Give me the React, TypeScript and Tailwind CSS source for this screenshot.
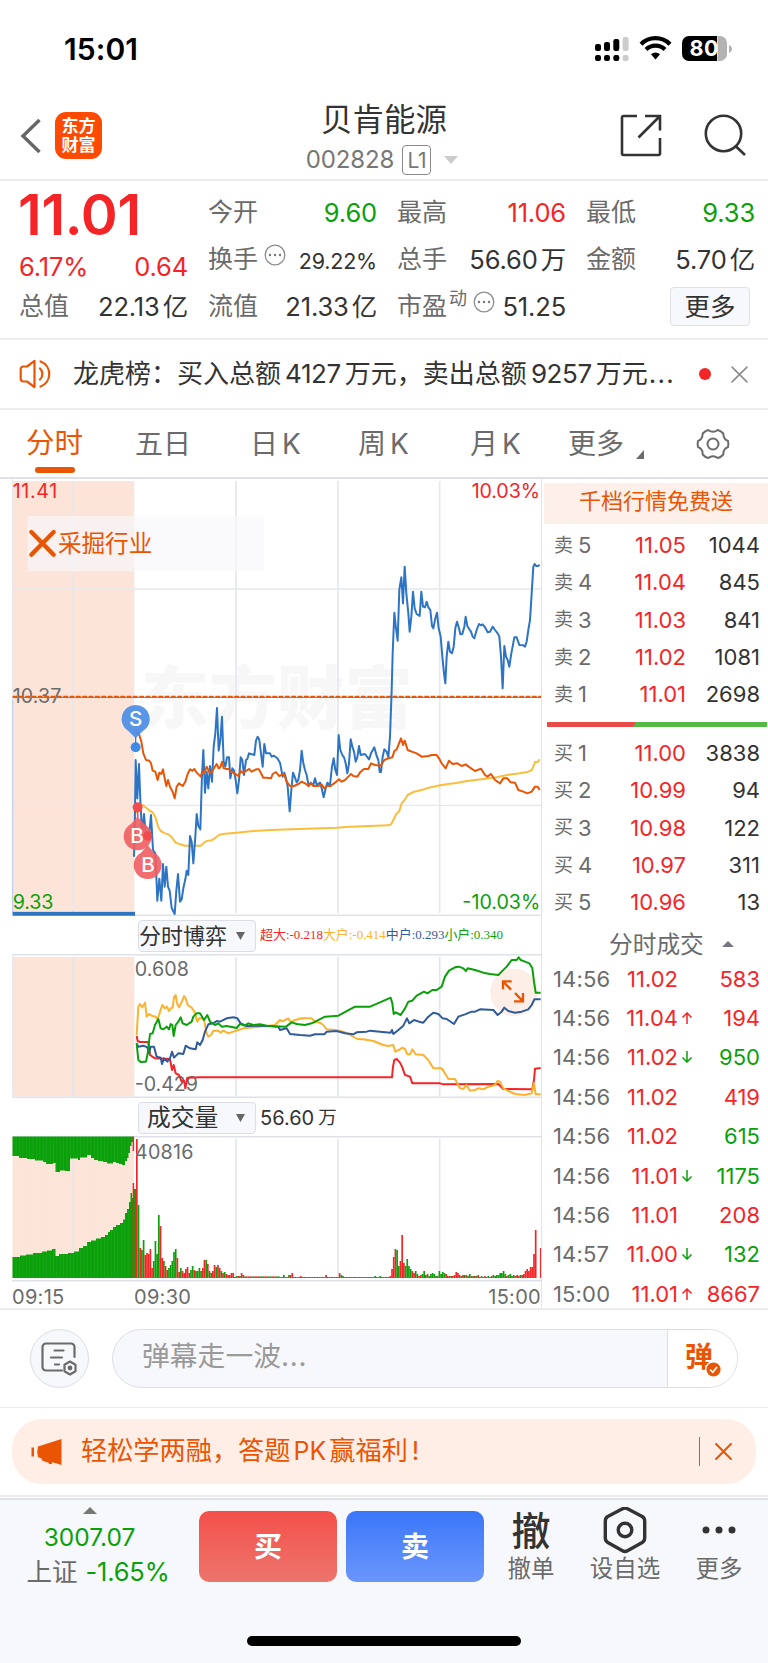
import React from "react";

const PRICE =
  "402,1160 404,1100 407,870 412,985 417,882 421,990 426,1090 432,1032 438,1100 446,1110 453,1035 459,1140 466,1150 472,1292 478,1226 484,1292 489,1182 494,1250 499,1190 504,1250 509,1262 515,1314 524,1332 529,1262 534,1212 540,1295 545,1288 550,1255 556,1228 560,1202 565,1215 570,1098 575,1115 580,1180 586,1100 590,1032 595,1068 601,1078 606,915 610,840 615,968 620,905 625,955 630,888 636,935 641,830 646,790 651,714 656,842 661,810 666,740 671,875 676,890 681,862 687,862 691,925 697,895 702,902 707,930 712,970 717,930 722,862 727,870 732,915 738,870 742,867 747,850 763,855 768,812 773,800 778,810 783,850 788,890 793,822 798,850 810,850 815,860 822,857 832,865 840,878 848,920 853,908 858,925 863,950 869,1024 874,960 879,908 884,920 890,937 895,930 900,900 905,842 910,880 915,900 920,915 926,948 932,938 940,945 945,925 950,945 960,938 965,955 971,982 977,955 982,938 990,945 996,890 1001,865 1006,900 1011,915 1016,795 1021,840 1027,855 1032,862 1037,880 1042,910 1047,880 1052,808 1057,830 1062,845 1067,875 1072,862 1077,828 1082,855 1095,852 1107,868 1113,850 1123,832 1130,858 1135,870 1139,906 1143,906 1148,860 1153,838 1160,845 1165,862 1170,800 1175,660 1178,550 1183,428 1188,475 1193,512 1198,358 1204,322 1209,400 1214,290 1219,370 1225,430 1229,485 1234,440 1239,365 1244,415 1250,432 1259,438 1264,365 1269,410 1275,412 1280,395 1285,412 1291,420 1296,468 1300,475 1306,445 1311,428 1316,475 1322,500 1327,560 1332,610 1336,640 1340,560 1345,515 1350,545 1356,550 1361,530 1366,475 1371,455 1377,475 1381,493 1387,492 1393,470 1397,440 1402,468 1408,478 1413,485 1418,500 1423,505 1430,480 1437,462 1443,466 1448,463 1455,472 1463,487 1470,485 1478,470 1485,480 1493,490 1498,500 1503,560 1508,655 1513,528 1518,560 1523,570 1528,590 1534,550 1543,502 1550,502 1558,525 1570,526 1575,530 1580,515 1585,480 1590,450 1595,370 1600,290 1604,282 1608,288 1614,288 1619,284";
const SECTOR =
  "407,780 412,790 418,795 424,815 430,850 438,870 448,872 453,880 458,902 466,905 473,930 478,908 484,912 489,898 494,925 499,948 504,930 510,950 518,965 524,985 530,950 537,940 548,948 556,935 563,912 570,898 577,902 583,897 590,908 602,920 607,905 613,908 620,890 627,905 633,910 640,898 650,882 656,895 661,892 666,875 671,895 680,897 687,897 692,905 700,908 715,918 722,903 728,908 738,903 747,897 755,905 768,898 777,898 783,910 790,923 800,923 813,925 818,912 828,906 837,918 852,912 860,935 870,948 882,948 895,942 905,935 915,940 925,948 932,940 940,948 955,948 965,943 972,955 982,948 992,948 1005,938 1017,928 1025,935 1035,930 1045,920 1053,912 1060,918 1072,920 1082,905 1092,897 1105,897 1113,880 1125,885 1142,887 1153,870 1165,865 1177,862 1183,843 1190,838 1197,820 1203,805 1209,825 1214,812 1223,840 1235,845 1250,850 1265,860 1285,858 1295,855 1310,855 1317,865 1325,880 1337,895 1347,872 1358,882 1372,880 1385,888 1397,883 1410,893 1425,903 1443,896 1455,915 1462,920 1473,912 1485,930 1500,940 1510,925 1522,925 1532,937 1545,938 1555,960 1570,965 1582,970 1595,965 1605,950 1613,950 1619,960";
const AVERAGE =
  "410,1030 413,1005 428,1005 440,1015 450,1023 458,1027 467,1043 475,1072 482,1083 495,1090 505,1093 515,1102 527,1118 540,1123 555,1127 580,1127 602,1127 612,1118 620,1113 635,1111 648,1102 658,1094 675,1091 710,1088 760,1083 810,1080 1010,1073 1050,1070 1165,1066 1173,1063 1180,1050 1188,1033 1198,1023 1205,1000 1215,988 1223,975 1240,966 1265,960 1280,955 1320,946 1350,941 1370,939 1400,933 1450,927 1490,922 1525,914 1560,910 1585,905 1595,900 1600,890 1605,876 1613,876 1619,868";

const FLOW_YELLOW =
  "410,375 415,290 420,282 427,292 435,278 440,320 447,312 455,317 467,320 473,330 480,305 487,285 495,295 501,290 507,303 513,295 518,292 522,262 527,255 531,280 537,292 543,280 548,270 552,258 557,265 563,285 575,293 583,305 588,320 592,335 598,325 605,325 612,330 620,370 625,380 633,375 640,362 655,362 662,368 670,362 685,370 700,365 715,360 730,355 760,352 800,348 825,345 840,330 848,334 855,330 865,325 872,337 885,330 905,325 935,325 945,335 960,338 970,345 980,358 1005,360 1030,365 1045,372 1072,387 1090,388 1120,393 1150,405 1165,408 1180,405 1186,425 1200,418 1207,413 1215,417 1222,433 1230,433 1237,418 1247,433 1270,435 1285,450 1300,475 1325,475 1335,490 1345,507 1365,507 1372,520 1380,535 1390,537 1399,525 1410,542 1425,540 1435,535 1450,538 1465,530 1485,525 1492,513 1500,515 1510,535 1525,543 1545,552 1575,555 1595,550 1602,520 1607,553 1622,553";
const FLOW_GREEN =
  "410,400 415,450 422,456 432,455 438,455 443,430 450,372 458,370 465,345 475,327 482,355 490,358 500,350 507,358 512,342 517,345 521,378 527,345 535,335 542,322 548,340 560,345 575,335 580,320 590,310 600,310 612,330 622,315 630,335 645,345 655,340 665,350 680,348 710,354 720,342 735,347 745,340 760,345 780,343 800,347 820,349 858,350 875,337 890,342 915,345 935,340 975,320 1015,317 1065,290 1110,290 1140,277 1172,263 1177,280 1181,312 1187,307 1202,315 1215,295 1225,275 1237,272 1250,257 1272,245 1282,250 1297,240 1310,240 1325,230 1335,200 1347,182 1365,172 1377,170 1390,175 1398,183 1403,175 1425,180 1450,188 1470,192 1495,195 1505,185 1520,170 1535,150 1550,150 1556,142 1562,150 1575,155 1588,160 1597,175 1602,215 1607,248 1622,248";
const FLOW_BLUE =
  "410,400 415,410 430,407 442,412 447,430 452,410 462,410 470,440 482,443 486,462 492,445 502,455 510,445 516,425 522,443 535,430 550,432 557,407 570,415 587,418 592,397 600,405 608,390 615,365 625,343 640,340 650,333 660,335 680,325 700,322 712,325 722,340 740,348 775,347 810,348 835,350 840,360 860,355 870,372 900,375 930,377 945,373 973,373 980,365 1010,363 1035,370 1060,373 1070,367 1100,365 1110,362 1140,365 1172,368 1176,360 1180,372 1195,360 1210,347 1221,325 1228,340 1242,330 1257,335 1270,338 1285,320 1300,308 1315,312 1328,325 1340,327 1362,342 1375,320 1395,313 1415,305 1425,305 1440,298 1480,300 1493,315 1505,305 1513,293 1525,303 1545,308 1565,305 1585,298 1595,285 1603,268 1622,268";
const FLOW_RED =
  "410,378 413,393 420,396 445,396 450,435 465,445 510,447 516,480 521,465 527,490 537,495 545,515 552,512 556,535 562,503 600,502 1176,502 1179,470 1183,450 1190,447 1200,458 1207,472 1215,495 1230,500 1237,520 1320,520 1330,523 1495,522 1510,537 1597,538 1602,510 1605,476 1622,474";

// Minute bars: sign gives the side (positive = red, negative = green), magnitude the height.
const OPENING = [
  139, -73, 30, -28, -38, 23, 25, 24, 29, 10, -17, -37, -24, -63, 52, 20, -17, 12, 8, -10, -13, -17, -26, -29, 20, 6, -10, 7, 5, 9,
  11, 5, -8, -12, 8, -7, -7, -10, -7, 10, 18, -18, 14, -7, -5, 7, 13, -11, 13, 10, -7, 5, -6, 4, 3, 3, 5, 5, 1, -2, 2, -2, 5, 3,
];
const SPIKES: Record<number, number> = {
  87: -3, 90: -3, 91: 3, 92: 5, 97: 2, 112: 3, 120: 5, 121: -3, 122: -2, 141: -2, 144: -2, 150: 2, 151: 9, 152: 21, 153: 29, 154: -28,
  155: -12, 156: 17, 157: 43, 158: 15, 159: -12, 160: -19, 161: -12, 162: -9, 163: 7, 164: 5, 165: -7, 166: -4, 167: 2, 168: 3,
  169: -4, 170: -7, 171: -3, 172: 4, 173: -2, 174: -4, 175: -5, 176: -4, 177: -2, 178: 2, 179: -7, 180: -4, 181: -6, 182: -5,
  183: 4, 184: 2, 185: 2, 186: -2, 187: 2, 188: 3, 189: 6, 190: 5, 191: 3, 192: -2, 193: 3, 194: -3, 195: 3, 196: -2, 197: -4,
  198: 2, 199: -2, 200: 2, 201: -2, 202: 3, 204: -2, 206: 2, 208: -2, 210: 2, 211: -3, 212: -2, 213: -3, 214: -3, 215: -5,
  216: -5, 217: -7, 218: -4, 219: 2, 220: -3, 221: -4, 222: -2, 223: 3, 224: -2, 225: 3, 226: 2, 227: -3, 228: 3, 229: 4, 230: 7,
  231: 9, 232: 7, 233: 11, 234: 11, 235: 24, 236: 48, 237: 0, 238: 0, 239: 30,
};
const VOLUME = Array.from({ length: 240 }, (_, i) => {
  if (i < OPENING.length) return OPENING[i];
  if (i in SPIKES) return SPIKES[i];
  const h = i < 85 ? 1.6 : 1;
  return i % 5 < 3 ? h : -h;
});

const SELLS = [
  ["5", "11.05", "1044"],
  ["4", "11.04", "845"],
  ["3", "11.03", "841"],
  ["2", "11.02", "1081"],
  ["1", "11.01", "2698"],
];
const BUYS = [
  ["1", "11.00", "3838"],
  ["2", "10.99", "94"],
  ["3", "10.98", "122"],
  ["4", "10.97", "311"],
  ["5", "10.96", "13"],
];
const TRADES: [string, string, string, string, boolean][] = [
  ["14:56", "11.02", "", "583", true],
  ["14:56", "11.04", "up", "194", true],
  ["14:56", "11.02", "down", "950", false],
  ["14:56", "11.02", "", "419", true],
  ["14:56", "11.02", "", "615", false],
  ["14:56", "11.01", "down", "1175", false],
  ["14:56", "11.01", "", "208", true],
  ["14:57", "11.00", "down", "132", false],
  ["15:00", "11.01", "up", "8667", true],
];

function Cross({ size, color, width }: { size: number; color: string; width: number }) {
  return (
    <svg width={size} height={size} viewBox="0 0 16 16" stroke={color} strokeWidth={width} strokeLinecap="round">
      <path d="M1 1L15 15M15 1L1 15" />
    </svg>
  );
}

function Dots() {
  return (
    <svg width="22" height="22" viewBox="0 0 22 22" className="shrink-0">
      <circle cx="11" cy="11" r="9.8" fill="none" stroke="#8c8c8c" strokeWidth="1.3" />
      <g fill="#777">
        <circle cx="6" cy="11" r="1.2" />
        <circle cx="11" cy="11" r="1.2" />
        <circle cx="16" cy="11" r="1.2" />
      </g>
    </svg>
  );
}

function StatusBar() {
  return (
    <div className="flex h-[98px] items-start justify-between pl-[64px] pr-[36px] pt-[34px]">
      <div className="text-[30px] font-semibold leading-[30px] tracking-[0.1px] text-black">15:01</div>
      <svg width="138" height="28" viewBox="0 0 138 28">
        <g>
          <rect x="1" y="10" width="6" height="7" rx="2.2" />
          <rect x="10" y="8" width="6" height="9" rx="2.2" />
          <rect x="19.3" y="5" width="6" height="12" rx="2.2" />
          <rect x="28.6" y="3" width="6" height="14" rx="2.2" fill="#ccc" />
          <rect x="1" y="21" width="6" height="6" rx="2.2" />
          <rect x="10" y="21" width="6" height="6" rx="2.2" />
          <rect x="19.3" y="21" width="6" height="6" rx="2.2" />
          <rect x="28.6" y="21" width="6" height="6" rx="2.2" fill="#ccc" />
        </g>
        <g fill="none" stroke="#000" strokeWidth="4.2">
          <path d="M47 10.2a20.5 20.5 0 0 1 29 0" />
          <path d="M52 15.6a13.5 13.5 0 0 1 19 0" />
        </g>
        <path d="M57 20.3a6.5 6.5 0 0 1 9 0L61.5 25.5z" />
        <path d="M95 2h28v25H95a7 7 0 0 1-7-7V9a7 7 0 0 1 7-7z" />
        <path d="M123.5 2h2.5a7 7 0 0 1 7 7v11a7 7 0 0 1-7 7h-2.5z" fill="#b3b3b3" />
        <path d="M135 11c4 1.5 4 6.5 0 8z" fill="#b3b3b3" />
        <text x="95.5" y="22" fontSize="21.5" fontWeight="700" fill="#fff" textLength="29" className="font-[Inter]">
          80
        </text>
      </svg>
    </div>
  );
}

function Header() {
  return (
    <div className="flex h-[83px] border-b-2 border-[#ececee]">
      <div className="flex w-[240px] items-start pl-[19px] pt-[14px]">
        <svg width="24" height="48" viewBox="0 0 24 48" fill="none" stroke="#666" strokeWidth="3.4">
          <path d="M20.5 8L4 24l16.5 16" />
        </svg>
        <div className="ml-[12px] flex h-[47px] w-[47px] flex-col items-center justify-center rounded-[11px] bg-[#ff4a02] text-[17px] font-bold leading-[19px] text-white">
          <span>东方</span>
          <span>财富</span>
        </div>
      </div>
      <div className="flex flex-1 flex-col items-center">
        <div className="mt-[2px] text-[31.5px] leading-[40px] text-[#333]">贝肯能源</div>
        <div className="mt-[2px] flex h-[36px] items-center pr-[4px] text-[#777]">
          <span className="text-[24px] leading-none tracking-[-0.1px]">002828</span>
          <span className="ml-[8px] flex h-[30px] w-[29px] items-center justify-center rounded-[4px] border-[1.5px] border-[#8a8a8a] text-[21px] leading-none tracking-[-0.5px]">
            L1
          </span>
          <svg width="14" height="8" viewBox="0 0 14 8" className="ml-[13px]" fill="#ccc">
            <path d="M0 0h14L7 8z" />
          </svg>
        </div>
      </div>
      <div className="flex w-[240px] items-start justify-end pr-[19px] pt-[14px]">
        <svg width="46" height="46" viewBox="0 0 46 46" fill="none" stroke="#333" strokeWidth="2.6">
          <path d="M19 4H5.500a1.500 1.500 0 0 0-1.500 1.500v36a1.500 1.500 0 0 0 1.500 1.500h35a1.500 1.500 0 0 0 1.500-1.500V26" />
          <path d="M27 4h15v14.500M42 4L20.500 25.500" />
        </svg>
        <svg width="46" height="46" viewBox="0 0 46 46" fill="none" stroke="#333" strokeWidth="2.6" className="ml-[39px]">
          <circle cx="20.5" cy="21.500" r="17.700" />
          <path d="M32.5 34l9.5 9" />
        </svg>
      </div>
    </div>
  );
}

function Num({ v, unit, c }: { v: string; unit?: string; c?: string }) {
  return (
    <span className={`flex items-center text-[25.5px] tracking-[-0.15px] ${c ?? "text-[#333]"}`}>
      {v}
      {unit && <span className="ml-[3px]">{unit}</span>}
    </span>
  );
}

function Quote() {
  const red = "text-[#f52427]";
  const green = "text-[#0aa00a]";
  const lab = "text-[25px] text-[#6b6b6b]";
  return (
    <div className="h-[159px] border-b-2 border-[#ececee] pl-[19px] pr-[13px] pt-[8px] leading-none">
      <div className="grid grid-cols-4 gap-x-[20px]">
        <div className="row-span-2 flex h-[94px] w-[169px] flex-col">
          <div className="ml-[-1px] mt-[-2px] text-[56px] font-semibold leading-[56px] tracking-[-0.3px] text-[#f52427]">11.01</div>
          <div className="mt-[11px] flex items-center justify-between">
            <Num v="6.17%" c={red} />
            <Num v="0.64" c={red} />
          </div>
        </div>
        <div className="flex h-[47px] items-center justify-between">
          <span className={lab}>今开</span>
          <Num v="9.60" c={green} />
        </div>
        <div className="flex h-[47px] items-center justify-between">
          <span className={lab}>最高</span>
          <Num v="11.06" c={red} />
        </div>
        <div className="flex h-[47px] items-center justify-between">
          <span className={lab}>最低</span>
          <Num v="9.33" c={green} />
        </div>
        <div className="flex h-[47px] items-center justify-between">
          <span className="flex items-center">
            <span className={lab}>换手</span>
            <span className="mb-[10px] ml-[6px]">
              <Dots />
            </span>
          </span>
          <span className="mt-[4px] text-[21.5px] tracking-[-0.2px] text-[#333]">29.22%</span>
        </div>
        <div className="flex h-[47px] items-center justify-between">
          <span className={lab}>总手</span>
          <Num v="56.60" unit="万" />
        </div>
        <div className="flex h-[47px] items-center justify-between">
          <span className={lab}>金额</span>
          <Num v="5.70" unit="亿" />
        </div>
        <div className="flex h-[47px] items-center justify-between">
          <span className={lab}>总值</span>
          <Num v="22.13" unit="亿" />
        </div>
        <div className="flex h-[47px] items-center justify-between">
          <span className={lab}>流值</span>
          <Num v="21.33" unit="亿" />
        </div>
        <div className="flex h-[47px] items-center justify-between">
          <span className="flex items-center">
            <span className={lab}>市盈</span>
            <span className="mb-[16px] ml-[2px] text-[18px] text-[#6b6b6b]">动</span>
            <span className="mb-[10px] ml-[6px]">
              <Dots />
            </span>
          </span>
          <Num v="51.25" />
        </div>
        <div className="flex h-[47px] items-center justify-end pr-[5px]">
          <span className="flex h-[39px] w-[80px] items-center justify-center rounded-[4px] border border-[#dfe1e6] bg-[#f7f8fb] text-[25.500px] text-[#333]">
            更多
          </span>
        </div>
      </div>
    </div>
  );
}

function Notice() {
  return (
    <div className="flex h-[70px] items-center border-b-2 border-[#ececee] pl-[19px] pr-[20px]">
      <svg width="34" height="30" viewBox="0 0 34 30" fill="none" stroke="#ea5504" strokeWidth="2.2" strokeLinejoin="round" strokeLinecap="round">
        <path d="M15.5 1.8v26.4L8 22.5H4.2a2.5 2.5 0 0 1-2.5-2.5V10a2.5 2.5 0 0 1 2.5-2.5H8z" />
        <path d="M21 9.5a7.5 7.5 0 0 1 0 11" />
        <path d="M21.5 2.5a13.3 13.3 0 0 1 0 25" />
      </svg>
      <div className="ml-[20px] flex w-[606px] items-center whitespace-nowrap text-[26px] leading-none text-[#333]">
        <span>龙虎榜：买入总额</span>
        <span className="mx-[4px] tracking-[-0.4px]">4127</span>
        <span>万元，卖出总额</span>
        <span className="mx-[4px] tracking-[-0.4px]">9257</span>
        <span>万元</span>
        <span className="ml-[1px] tracking-[1.2px]">...</span>
      </div>
      <span className="ml-[20px] h-[12px] w-[12px] rounded-full bg-[#f52427]" />
      <span className="ml-auto">
        <Cross size={17} color="#8c8c8c" width={1.5} />
      </span>
    </div>
  );
}

function Tabs() {
  const t = "flex items-center gap-[4px] text-[28px] leading-none text-[#6b6b6b]";
  return (
    <div className="flex h-[69px] items-center border-b-2 border-[#dfe1e8] pl-[26px]">
      <div className="relative w-[109px] text-[28.5px] leading-none text-[#ea5504]">
        分时
        <span className="absolute left-[9px] top-[38px] h-[6px] w-[40px] rounded-[3px] bg-[#ea5504]" />
      </div>
      <div className={`w-[115px] ${t}`}>五日</div>
      <div className={`w-[108px] ${t}`}>
        日<span>K</span>
      </div>
      <div className={`w-[112px] ${t}`}>
        周<span>K</span>
      </div>
      <div className={`w-[98px] ${t}`}>
        月<span>K</span>
      </div>
      <div className={`w-[128px] ${t}`}>
        更多
        <svg width="8" height="9" viewBox="0 0 8 9" className="ml-[8px] mt-[22px]" fill="#6b6b6b">
          <path d="M8 0v9H0z" />
        </svg>
      </div>
      <svg width="34" height="32" viewBox="0 0 34 32" fill="none" stroke="#6b6b6b" strokeWidth="2">
        <path
          strokeLinejoin="round"
          d="M12.2 2Q14.500 3.800 17 3.800Q19.500 3.800 21.800 2Q25 2.800 27.300 5.500Q27.300 9.500 29 11Q30.200 12.300 32 13Q32.800 16 32 19Q30.200 19.700 29 21Q27.300 22.500 27.300 26.500Q25 29.200 21.800 30Q19.500 28.200 17 28.200Q14.500 28.200 12.200 30Q9 29.200 6.700 26.500Q6.700 22.500 5 21Q3.800 19.700 2 19Q1.200 16 2 13Q3.800 12.300 5 11Q6.700 9.500 6.700 5.500Q9 2.800 12.200 2Z"
        />
        <circle cx="17" cy="16" r="5.500" />
      </svg>
    </div>
  );
}

function PriceChart() {
  return (
    <svg width="541" height="437" viewBox="0 27 1623 1311" className="block">
      <rect x="38" y="33" width="365" height="1290" fill="#fce5d8" />
      <g fill="#f7f7f8" fontSize="204" fontWeight="900" fontFamily="'Noto Sans CJK SC', sans-serif">
        <text x="422" y="760" textLength="816">
          东方财富
        </text>
      </g>
      <g stroke="#e6e8ee" strokeWidth="5" fill="none">
        <path d="M219 33V1330M708 33V1330M1014 33V1330M1319 33V1330" />
        <path d="M38 357H1623M38 1006H1623" strokeWidth="4" />
        <path d="M38 27V1337" strokeWidth="3" />
        <path d="M38 1336H1623" stroke="#e2e3e8" />
      </g>
      <path d="M38 690V1330" stroke="#a9c3e6" strokeWidth="2.5" />
      <g fontSize="59" className="font-[Inter]">
        <text x="38" y="84" fill="#f52427" textLength="134">11.41</text>
        <text x="38" y="700" fill="#6b6b6b" textLength="146">10.37</text>
        <text x="38" y="1317" fill="#0aa00a" textLength="122">9.33</text>
      </g>
      <path d="M38 682H1623" stroke="#8a8a8a" strokeWidth="4" />
      <path d="M38 680H1623" stroke="#ea5504" strokeWidth="6" strokeDasharray="14 5" />
      <path d="M38 1331H405" stroke="#2e74c4" strokeWidth="12" />
      <rect x="83" y="138" width="709" height="166" fill="#f7f8fc" fillOpacity=".65" />
      <path d="M94 186L161 254M161 186L94 254" stroke="#ea5504" strokeWidth="13" strokeLinecap="round" />
      <text x="174" y="247" fontSize="71" fill="#ea5504" textLength="283" fontFamily="'Noto Sans CJK SC', sans-serif">
        采掘行业
      </text>
      <g fill="none" strokeWidth="6" strokeLinejoin="round">
        <polyline points={AVERAGE} stroke="#fbbd3c" />
        <polyline points={PRICE} stroke="#2e74c4" />
        <polyline points={SECTOR} stroke="#ea5504" />
      </g>
      <g fontSize="59" className="font-[Inter]">
        <text x="1415" y="84" fill="#f52427" textLength="205">10.03%</text>
        <text x="1387" y="1318" fill="#0aa00a" textLength="234">-10.03%</text>
      </g>
      <g fill="#4c8de6" fillOpacity=".92">
        <path d="M407 705a42 42 0 0 1 22 78l-22 22l-22-22a42 42 0 0 1 22-78z" />
        <path d="M407 800V830" stroke="#2e82e6" strokeWidth="4" />
        <circle cx="407" cy="832" r="15" fill="#2e82e6" />
      </g>
      <path d="M413 1012V1044" stroke="#f04c4e" strokeWidth="5" />
      <circle cx="413" cy="1012" r="15" fill="#f04c4e" />
      <path d="M413 1040l20 22a42 42 0 1 1-40 0z" fill="#f15d60" fillOpacity=".9" />
      <path d="M443 1126l20 22a42 42 0 1 1-40 0z" fill="#f15d60" fillOpacity=".9" />
      <circle cx="443" cy="1098" r="14" fill="#f04c4e" />
      <g fill="#fff" fontSize="62" fontWeight="500" textAnchor="middle" className="font-[Inter]">
        <text x="407" y="768">S</text>
        <text x="411" y="1120">B</text>
        <text x="444" y="1205">B</text>
      </g>
    </svg>
  );
}

function FlowChart() {
  return (
    <svg width="541" height="144" viewBox="0 132 1623 432" className="block">
      <rect x="38" y="141" width="365" height="418" fill="#fce5d8" />
      <g stroke="#e2e5ec" strokeWidth="5" fill="none">
        <path d="M219 141V559M708 141V559M1014 141V559M1319 141V559" />
        <path d="M38 134H1623M38 562H1623" stroke="#dfe1e8" />
        <path d="M38 132V564" strokeWidth="3" />
      </g>
      <g fontSize="59" fill="#6b6b6b" className="font-[Inter]">
        <text x="404" y="199" textLength="163">0.608</text>
        <text x="404" y="542" textLength="190">-0.429</text>
      </g>
      <circle cx="1542" cy="247" r="71" fill="#fdeee7" />
      <g fill="none" strokeWidth="6" strokeLinejoin="round">
        <polyline points={FLOW_RED} stroke="#f52427" />
        <polyline points={FLOW_YELLOW} stroke="#fbb32e" />
        <polyline points={FLOW_BLUE} stroke="#2f5a9c" />
        <polyline points={FLOW_GREEN} stroke="#0aa00a" />
      </g>
      <path
        d="M1509 238V214H1535M1509 214L1533 239M1569 249V274H1542M1569 274L1545 249"
        fill="none"
        stroke="#ea5504"
        strokeWidth="7"
      />
    </svg>
  );
}

function VolumeChart() {
  return (
    <svg width="541" height="146" viewBox="0 0 541 146" className="block">
      <rect x="12.5" y="1" width="121.5" height="141" fill="#fce5d8" />
      <g stroke="#e2e5ec" strokeWidth="1.5" fill="none">
        <path d="M73 2V142M236 3V142M338 3V142M439.7 3V142" />
        <path d="M12 .7H541M12 144.700H541" stroke="#dfe1e8" />
      </g>
      <path
        fill="#0aa00a"
        d="M12.5 .5H133V6H131.5V10H130V17H128.5V22H127V25H125V29H122V28H119V27H116V26H113V27.5H107V26H103V25H98V24H94V22H91V19H87V21.5H80V24H78V22.5H70V35H65V34.5H60V36H55.5V27H53V28H46V26H43V24.5H35V23H27V22H19V20H12.5z"
      />
      <path
        fill="#0aa00a"
        d="M12.5 142V121H20V119.5H26V118.5H33V117H42V115.5H47V114.5H52V113H55.5V120H59V118H68V117H74V115.5H79V112H83V110H87V106H91V104.5H96V102.5H101V101H105V99H108V96H110V94H113V91H116V89H120V87H123V83.5H125V77H127V73H129V66H130.5V57H132V62H134V53H136V142z"
      />
      <g stroke="#fff" strokeOpacity=".13" strokeWidth=".6">
        {Array.from({ length: 34 }, (_, i) => (
          <path key={i} d={`M${16 + i * 3.4} 1V142`} />
        ))}
      </g>
      <path d="M133.4 .5V15M133.4 47V142" stroke="#f52427" strokeWidth="1.5" />
      {VOLUME.map((v, i) => (
        <rect
          key={i}
          x={136 + i * 1.69}
          y={142 - Math.abs(v)}
          width={1.69}
          height={Math.abs(v)}
          fill={v > 0 ? "#f52427" : "#0aa00a"}
        />
      ))}
      <text x="135" y="22.500" fontSize="19.7" fill="#6b6b6b" textLength="58.500" className="font-[Inter]">
        40816
      </text>
    </svg>
  );
}

function Picker({ label, size }: { label: string; size: string }) {
  return (
    <div className={`flex h-[32px] w-[118px] items-center rounded-[4px] border border-[#dcdee5] bg-[#f7f8fb] leading-none text-[#333] ${size}`}>
      <span>{label}</span>
      <svg width="9" height="8" viewBox="0 0 9 8" className="ml-auto mr-[10px]" fill="#666">
        <path d="M0 0h9L4.5 8z" />
      </svg>
    </div>
  );
}

function Charts() {
  return (
    <div className="w-[542px] border-r-[1.5px] border-[#e2e3e8]">
      <PriceChart />
      <div className="flex h-[38px] items-center pl-[138px] pt-[1px]">
        <Picker label="分时博弈" size="text-[22px]" />
        <div className="ml-[4px] whitespace-nowrap font-['Liberation_Serif','Noto_Sans_CJK_SC',serif] text-[12.95px] leading-none">
          <span className="text-[#f52427]">超大:-0.218</span>
          <span className="text-[#fbb32e]">大户:-0.414</span>
          <span className="text-[#2f5a9c]">中户:0.293</span>
          <span className="text-[#0aa00a]">小户:0.340</span>
        </div>
      </div>
      <FlowChart />
      <div className="flex h-[38px] items-center pl-[138px] pt-[1px]">
        <Picker label="成交量" size="pl-[8px] text-[23.800px]" />
        <div className="ml-[4px] flex gap-[4px] text-[20px] leading-none text-[#333]">
          <span>56.60</span>
          <span className="text-[18.500px]">万</span>
        </div>
      </div>
      <VolumeChart />
      <div className="flex h-[29px] items-center pl-[12px] text-[20px] leading-none tracking-[0.3px] text-[#6b6b6b]">
        <span className="w-[122px]">09:15</span>
        <span>09:30</span>
        <span className="ml-auto">15:00</span>
      </div>
    </div>
  );
}

function Level({ side, row }: { side: string; row: string[] }) {
  return (
    <div className="flex h-[37.3px] items-center pl-[11px] pr-[8px] text-[22px] leading-none">
      <span className="text-[19px] text-[#6b6b6b]">{side}</span>
      <span className="ml-[5px] text-[#6b6b6b]">{row[0]}</span>
      <span className="ml-auto text-[#f52427]">{row[1]}</span>
      <span className="w-[74px] text-right text-[#333]">{row[2]}</span>
    </div>
  );
}

function OrderBook() {
  return (
    <div className="flex-1 pl-[1px]">
      <div className="ml-[1px] mt-[4px] flex h-[41px] items-center justify-center bg-[#fdf0ea] pb-[5px] text-[22px] leading-none text-[#ea5504]">
        千档行情免费送
      </div>
      <div className="mt-[2.5px]">
        {SELLS.map((r) => (
          <Level key={r[0]} side="卖" row={r} />
        ))}
      </div>
      <div className="ml-[4px] mr-[1px] mt-[9px] h-[5px]">
        <svg width="220" height="5" viewBox="0 0 220 5" className="block">
          <path d="M0 0H220V5H0z" fill="#55b945" />
          <path d="M0 0H89L86 5H0z" fill="#e94b4b" />
        </svg>
      </div>
      <div className="mt-[7.5px]">
        {BUYS.map((r) => (
          <Level key={r[0]} side="买" row={r} />
        ))}
      </div>
      <div className="flex h-[38px] items-center pl-[66px] pt-[9px] text-[23.7px] leading-none text-[#6b6b6b]">
        分时成交
        <svg width="12" height="6" viewBox="0 0 12 6" className="ml-[18px]" fill="#77777f">
          <path d="M0 6h12L6 0z" />
        </svg>
      </div>
      <div>
        {TRADES.map((t, i) => (
          <div key={i} className="flex h-[39.4px] items-center pl-[10px] pr-[8px] text-[22px] leading-none">
            <span className="tracking-[0.15px] text-[#6b6b6b]">{t[0]}</span>
            <span className="ml-auto text-[#f52427]">{t[1]}</span>
            <span className="flex w-[15px] justify-end">
              {t[2] && (
                <svg
                  width="12"
                  height="12"
                  viewBox="0 0 12 12"
                  fill="none"
                  stroke={t[2] === "up" ? "#f52427" : "#0aa00a"}
                  strokeWidth="1.5"
                >
                  <path d={t[2] === "up" ? "M6 12V1M1.5 5.5L6 1l4.5 4.5" : "M6 0v11M1.5 6.5L6 11l4.5-4.5"} />
                </svg>
              )}
            </span>
            <span className={`w-[67px] text-right ${t[4] ? "text-[#f52427]" : "text-[#0aa00a]"}`}>{t[3]}</span>
          </div>
        ))}
      </div>
    </div>
  );
}

function CommentBar() {
  return (
    <div className="flex h-[98px] items-center border-b border-[#ececee] pl-[30px] pr-[30px]">
      <div className="flex h-[59px] w-[59px] items-center justify-center rounded-full border border-[#dcdee5] bg-[#f7f8fb]">
        <svg width="37" height="34" viewBox="0 0 37 34" fill="none" stroke="#6b6b6b" strokeWidth="2.2" strokeLinecap="round" strokeLinejoin="round">
          <path d="M21 28.5H5a3.5 3.5 0 0 1-3.5-3.500V5A3.5 3.5 0 0 1 5 1.5h25A3.5 3.5 0 0 1 33.5 5v10" />
          <path d="M13.5 8.5h9M10 15.5h11M14 22.5h4" />
          <path d="M29 19.5l5.5 3.3v6.4L29 32.5l-5.5-3.300v-6.400z" />
          <circle cx="29" cy="26" r="1.3" fill="#6b6b6b" />
        </svg>
      </div>
      <div className="ml-[23px] flex h-[59px] flex-1 items-center overflow-hidden rounded-full border border-[#dcdee5] bg-[#f7f8fb]">
        <div className="flex-1 pb-[4px] pl-[29px] text-[27.8px] leading-none text-[#9a9a9a]">
          弹幕走一波<span className="tracking-[0.8px]">...</span>
        </div>
        <div className="relative h-full w-[70px] border-l-[1.5px] border-[#dcdee5] bg-white">
          <span className="absolute left-[17px] top-[13px] text-[28px] font-bold leading-none text-[#ea5504]">弹</span>
          <svg width="17" height="17" viewBox="0 0 17 17" className="absolute left-[37px] top-[31px]">
            <circle cx="8.5" cy="8.5" r="7.8" fill="#ea5504" stroke="#fff" strokeWidth="1.4" />
            <path d="M5 8.5l2.800 2.800L12 6" fill="none" stroke="#fff" strokeWidth="1.7" />
          </svg>
        </div>
      </div>
    </div>
  );
}

function Promo() {
  return (
    <div className="h-[89px] border-b-2 border-[#ececee] px-[12px] pt-[11px]">
      <div className="flex h-[65px] items-center rounded-[30px] bg-[#feeee6] pl-[19px] pr-[24px]">
        <svg width="31" height="26" viewBox="0 0 31 26" fill="#ea5504">
          <path d="M.5 8.5h2.5v9H.5zM7 7.5L30.5 0v26l-9-2.800-1 1.800h-2.500l-1-2-2 .500-1-1.300L11 21.500l-.5-2L7 18q-1.5-5 0-10.500z" />
        </svg>
        <div className="ml-[19px] flex items-center whitespace-nowrap text-[26.2px] leading-none text-[#ea5504]">
          <span>轻松学两融，答题</span>
          <span className="mx-[3px] text-[25px]">PK</span>
          <span>赢福利</span>
          <span className="ml-[4px]">!</span>
        </div>
        <span className="ml-auto h-[29px] w-[1.5px] bg-[#ea5504]" />
        <span className="ml-[15px]">
          <Cross size={17} color="#ea5504" width={1.9} />
        </span>
      </div>
    </div>
  );
}

function BottomBar() {
  const b = "flex h-[71px] w-[138px] items-center justify-center rounded-[10px] text-[28px] font-bold leading-none text-white";
  const c = "flex flex-col items-center text-[23.5px] leading-none text-[#6b6b6b]";
  return (
    <div className="mt-[1px] flex flex-1 flex-col border-t-2 border-[#dfe0e4] bg-[#f7f8fb]">
      <div className="flex h-[134px] pt-[7px]">
        <div className="flex w-[199px] flex-col items-center pr-[3px] text-[24.5px] leading-none text-[#0aa00a]">
          <svg width="14" height="7" viewBox="0 0 14 7" className="mr-[17px]" fill="#777">
            <path d="M0 7h14L7 0z" />
          </svg>
          <div className="mr-[17px] mt-[11px]">3007.07</div>
          <div className="mt-[9px] flex items-center">
            <span className="mr-[8px] text-[25.5px] text-[#6b6b6b]">上证</span>
            <span className="text-[25.5px] tracking-[-0.2px]">-1.65%</span>
          </div>
        </div>
        <div className="flex gap-[9px] pt-[4px]">
          <div className={`${b} bg-gradient-to-b from-[#f44f4a] to-[#ec746c]`}>买</div>
          <div className={`${b} bg-gradient-to-b from-[#3a76fa] to-[#6b96fb]`}>卖</div>
        </div>
        <div className={`ml-[23px] w-[48px] ${c}`}>
          <span className="mt-[4px] text-[39px] font-medium text-[#333]">撤</span>
          <span className="mt-[7px]">撤单</span>
        </div>
        <div className={`ml-[34px] w-[72px] ${c}`}>
          <svg width="44" height="48" viewBox="0 0 44 48" fill="none" stroke="#333" strokeWidth="3.4" strokeLinejoin="round">
            <path d="M19.5 1.800Q22 .3 24.5 1.800L39.2 9.500Q41.7 11 41.7 14V31Q41.7 34 39.2 35.500L24.5 43.800Q22 45.300 19.500 43.800L4.800 35.500Q2.300 34 2.300 31V14Q2.300 11 4.800 9.500Z" />
            <circle cx="22" cy="23" r="6.8" />
          </svg>
          <span className="mt-[2px]">设自选</span>
        </div>
        <div className={`ml-[34px] w-[48px] ${c}`}>
          <svg width="34" height="48" viewBox="0 0 34 48" fill="#333">
            <circle cx="4" cy="23" r="3.5" />
            <circle cx="17" cy="23" r="3.5" />
            <circle cx="30" cy="23" r="3.5" />
          </svg>
          <span className="mt-[2px]">更多</span>
        </div>
      </div>
      <div className="mx-auto mt-[2px] h-[10px] w-[274px] rounded-full bg-black" />
    </div>
  );
}

export default function App() {
  return (
    <div className="flex h-[1663px] w-[768px] flex-col overflow-hidden bg-white font-['Inter','Noto_Sans_CJK_SC',sans-serif]">
      <StatusBar />
      <Header />
      <Quote />
      <Notice />
      <Tabs />
      <div className="flex h-[831px] border-b-2 border-[#ececee]">
        <Charts />
        <OrderBook />
      </div>
      <CommentBar />
      <Promo />
      <BottomBar />
    </div>
  );
}
